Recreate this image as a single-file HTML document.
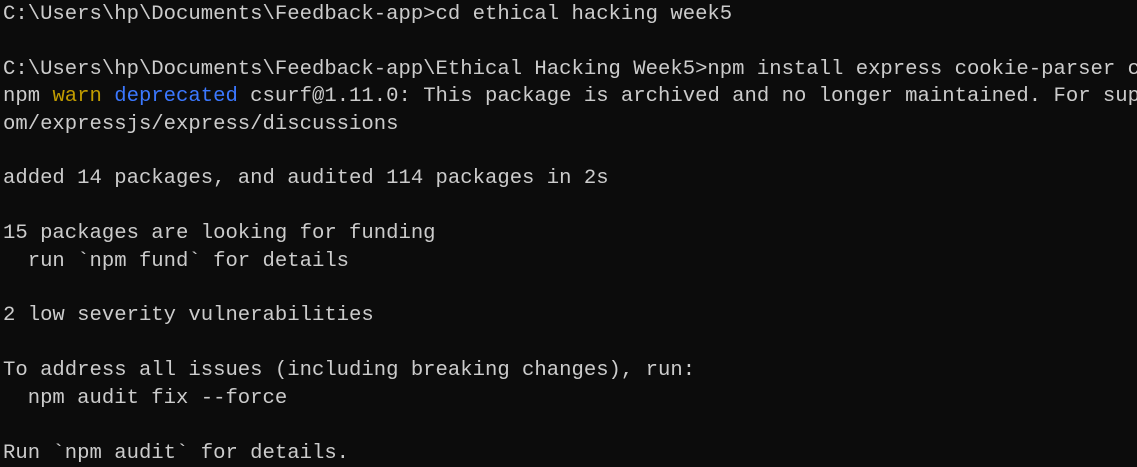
<!DOCTYPE html>
<html><head><style>
html,body{margin:0;padding:0;background:#0c0c0c;width:1137px;height:465px;overflow:hidden}
pre{margin:0;padding:0 0 0 3px;position:absolute;top:1px;left:0;font-family:"Liberation Mono",monospace;font-size:20.6px;line-height:27.4px;color:#cccccc;white-space:pre}
.y{color:#c19c00}.b{color:#3b78ff}
</style></head><body><pre>C:\Users\hp\Documents\Feedback-app>cd ethical hacking week5

C:\Users\hp\Documents\Feedback-app\Ethical Hacking Week5>npm install express cookie-parser csurf
npm <span class="y">warn</span> <span class="b">deprecated</span> csurf@1.11.0: This package is archived and no longer maintained. For support
om/expressjs/express/discussions

added 14 packages, and audited 114 packages in 2s

15 packages are looking for funding
  run `npm fund` for details

2 low severity vulnerabilities

To address all issues (including breaking changes), run:
  npm audit fix --force

Run `npm audit` for details.</pre></body></html>
